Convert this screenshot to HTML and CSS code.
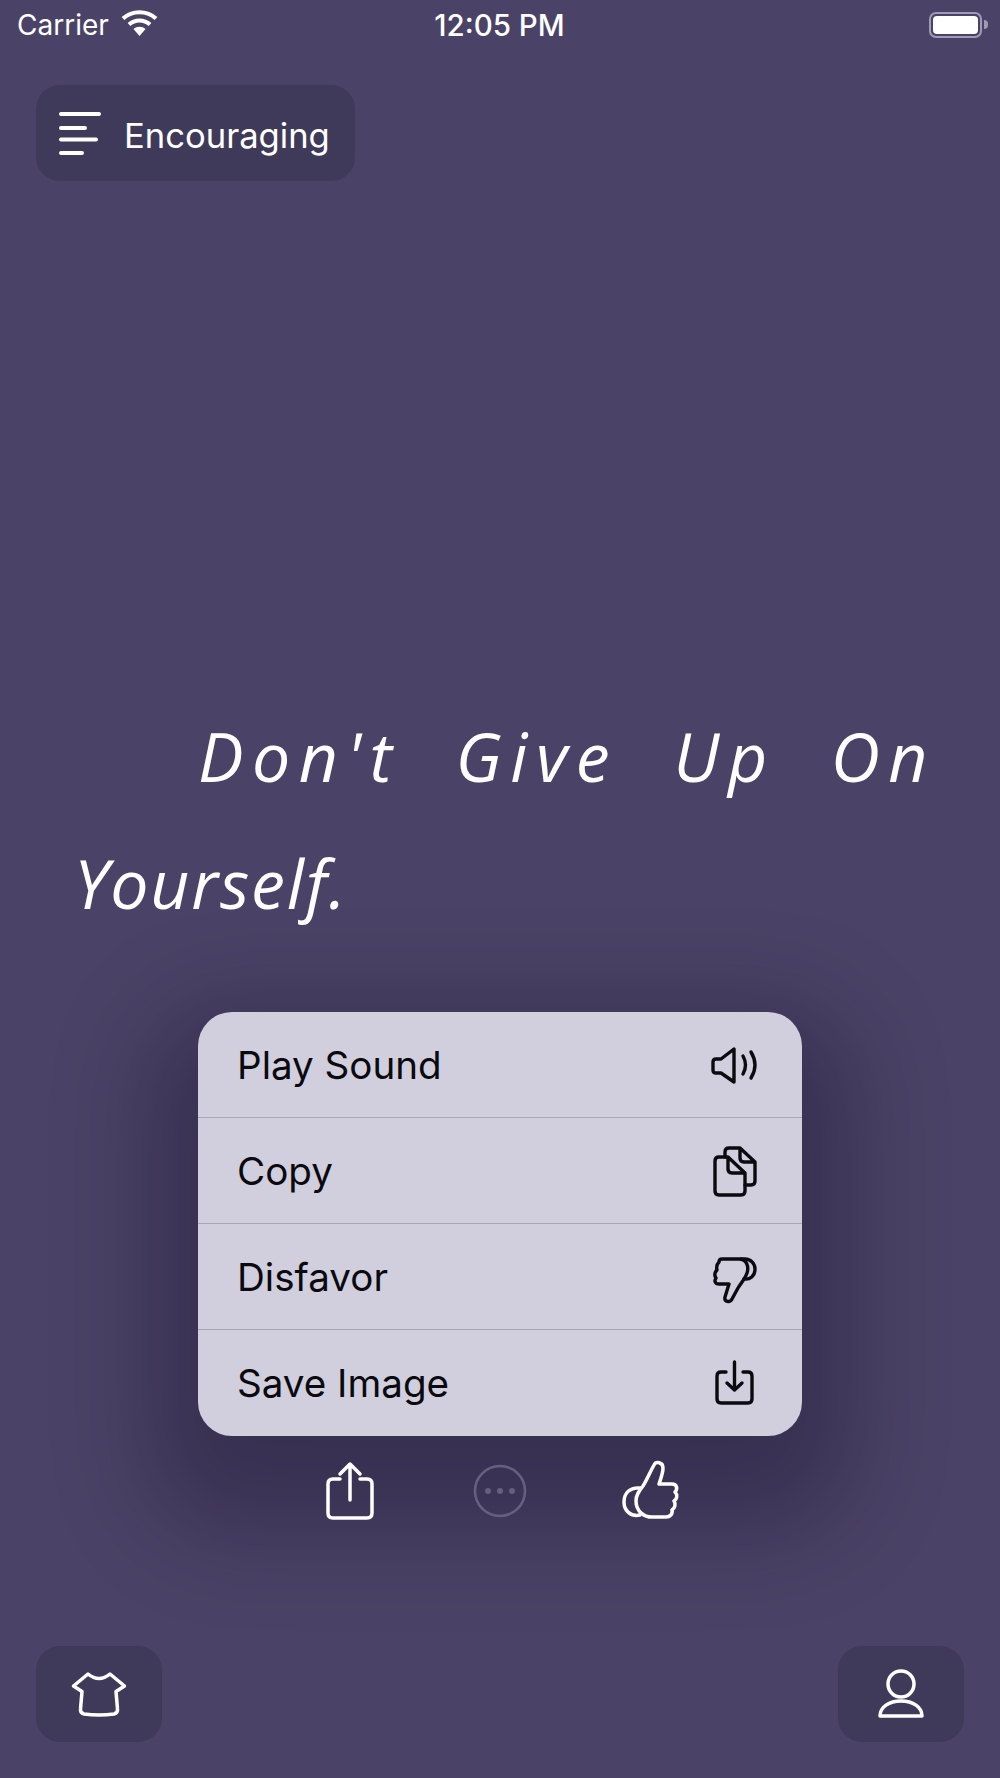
FILE: index.html

```html
<!DOCTYPE html>
<html lang="en">
<head>
  <meta charset="UTF-8" />
  <title>Encouraging</title>
  <link rel="stylesheet" href="styles.css">
</head>
<body>
  <div class="screen">
    <div class="status-bar">
      <div class="status-left">
        <span class="carrier">Carrier</span>
        <svg class="wifi" width="38" height="28" viewBox="0 0 38 28">
          <path d="M2 9.500C11 1 26 1 35 9.500M8 15.500C14 10 23 10 29 15.500" fill="none" stroke="#fff" stroke-width="4"/>
          <path d="M12.500 20C16 17 21 17 24.500 20L18.500 27Z" fill="#fff"/>
        </svg>
      </div>
      <span class="time">12:05 PM</span>
      <div class="battery"><div class="battery-fill"></div></div>
    </div>

    <div class="top-row">
      <div class="pill">
        <svg width="42" height="43" viewBox="0 0 42 43">
          <path d="M2 2H40M2 16H26M2 27.500H37M2 41H23" fill="none" stroke="#fff" stroke-width="4" stroke-linecap="round"/>
        </svg>
        <span class="pill-label">Encouraging</span>
      </div>
    </div>

    <p class="quote"><span class="quote-first">Don't Give Up On</span><br><span class="quote-second">Yourself.</span></p>

    <div class="menu">
      <div class="menu-row">
        <span>Play Sound</span>
        <svg class="menu-icon" width="56" height="56" viewBox="-4 -4 56 56">
          <path d="M23 8V41L10 32H5Q2 32 2 29V21Q2 18 5 18H10Z"/>
          <path d="M32 15Q37 24 32 33M40 11Q48 24 40 37"/>
        </svg>
      </div>
      <div class="menu-row">
        <span>Copy</span>
        <svg class="menu-icon" width="56" height="56" viewBox="-4 -4 56 56">
          <path d="M14 10V5Q14 1 18 1H29L44 15V34Q44 38 40 38H34M29 1V11Q29 15 33 15H44"/>
          <path d="M17 10H8Q4 10 4 14V44Q4 48 8 48H30Q34 48 34 44V26ZM17 10V22Q17 26 21 26H34"/>
        </svg>
      </div>
      <div class="menu-row">
        <span>Disfavor</span>
        <svg class="menu-icon" width="56" height="56" viewBox="-4 -4 56 56">
          <path d="M11 6H28C36 6 38 14 36 20C34 26 30 30 27 35L21 46C19 50 13 49 14 44L18 31H8C4 31 3 28 5 25C3 22 4 19 6 17C5 13 7 10 8 9Q8 6 11 6Z"/>
          <path d="M30 6H34C40 6 44 11 44 16C44 23 39 27 33 26"/>
        </svg>
      </div>
      <div class="menu-row">
        <span>Save Image</span>
        <svg class="menu-icon" width="56" height="56" viewBox="-4 -4 56 56">
          <path d="M15 13H10Q6 13 6 17V40Q6 44 10 44H37Q41 44 41 40V17Q41 13 37 13H32"/>
          <path d="M23.500 3V31M16 24L23.500 31L31 24"/>
        </svg>
      </div>
    </div>

    <div class="actions">
      <svg class="action-icon" width="64" height="72" viewBox="0 0 64 72">
        <path d="M22 24H15Q10 24 10 29V58Q10 63 15 63H49Q54 63 54 58V29Q54 24 49 24H42"/>
        <path d="M32 45V9M22 19L32 9L42 19"/>
      </svg>
      <svg class="more-icon" width="64" height="72" viewBox="0 0 64 72">
        <circle cx="32" cy="36" r="25" fill="none" stroke="#675f80" stroke-width="2.500"/>
        <circle cx="20" cy="36" r="3" fill="#675f80"/>
        <circle cx="32" cy="36" r="3" fill="#675f80"/>
        <circle cx="44" cy="36" r="3" fill="#675f80"/>
      </svg>
      <svg class="action-icon" width="64" height="72" viewBox="0 0 64 72">
        <path d="M36 10C38 6 45 7 45 13C45 18 43 23 41 29H54C59 29 60 34 57 37C60 40 59 44 56 46C58 49 57 53 54 55C55 59 52 62 48 62H36C26 63 18 56 18 46C18 40 21 36 25 31C29 25 32 17 36 10Z"/>
        <path d="M22 33C12 32 6 38 6 47C6 56 13 62 22 60"/>
      </svg>
    </div>

    <div class="bottom-row">
      <div class="square-btn">
        <svg class="action-icon" width="64" height="56" viewBox="0 0 64 56">
          <path d="M21 8Q32 17 43 8L57.500 20L49 25.500L50.500 43Q51 47 47 48Q32 50 17 48Q13 47 13.500 43L15 25.500L6.500 20Z"/>
        </svg>
      </div>
      <div class="square-btn">
        <svg class="action-icon" width="64" height="56" viewBox="0 0 64 56">
          <circle cx="32" cy="18" r="13"/>
          <path d="M11 50C11 41 20 35 32 35C44 35 53 41 53 50Z"/>
        </svg>
      </div>
    </div>
  </div>
</body>
</html>
```

FILE: styles.css

```css
body {
  margin: 0;
  background-color: #4b4367;
  font-family: Inter, "Liberation Sans", sans-serif;
  color: #ffffff;
}

.screen {
  display: flex;
  flex-direction: column;
  height: 1778px;
  overflow: hidden;
}

.status-bar {
  display: grid;
  grid-template-columns: 1fr auto 1fr;
  align-items: center;
  height: 50px;
  padding: 0 18px 0 17px;
}

.status-left {
  display: flex;
  align-items: center;
  gap: 12px;
}

.carrier {
  font-size: 28px;
}

.time {
  font-size: 29.500px;
  font-weight: 500;
}

.wifi {
  margin-top: -4px;
}

.battery {
  justify-self: end;
  box-sizing: border-box;
  width: 53px;
  height: 26px;
  padding: 2px;
  border: 2px solid #a09bb2;
  border-radius: 7px;
  position: relative;
}

.battery::after {
  content: "";
  position: absolute;
  right: -8px;
  top: 6px;
  width: 4px;
  height: 9px;
  background-color: #a09bb2;
  border-radius: 0 4px 4px 0;
}

.battery-fill {
  height: 100%;
  background-color: #ffffff;
  border-radius: 4px;
}

.top-row {
  display: flex;
  padding: 35px 36px 0;
}

.pill {
  display: flex;
  align-items: center;
  gap: 23px;
  height: 96px;
  padding: 0 25px 0 23px;
  background-color: #403a5a;
  border-radius: 24px;
}

.pill-label {
  margin-top: 3px;
  font-size: 34.600px;
}

.quote {
  margin: 511px 0 0;
  padding-left: 74px;
  text-indent: 124px;
  font-family: "Open Sans", sans-serif;
  font-style: italic;
  font-size: 68px;
  line-height: 127px;
}

.quote-first {
  letter-spacing: 8.500px;
  word-spacing: 29px;
}

.quote-second {
  letter-spacing: 1.800px;
}

.menu {
  width: 604px;
  margin: 66px auto 0;
  background-color: #d1cfdd;
  border-radius: 34px;
  box-shadow: 0 45px 90px 50px rgba(20, 15, 40, 0.34);
  color: #0a0a0f;
}

.menu-row {
  display: flex;
  justify-content: space-between;
  align-items: center;
  box-sizing: border-box;
  height: 106px;
  padding: 0 39px;
  font-size: 38.600px;
  border-bottom: 1px solid #a9a6b7;
}

.menu-row:last-child {
  border-bottom: none;
}

.menu-icon {
  fill: none;
  stroke: #0a0a0f;
  stroke-width: 3.400;
  stroke-linecap: round;
  stroke-linejoin: round;
}

.actions {
  display: flex;
  justify-content: center;
  gap: 86px;
  margin-top: 19px;
  position: relative;
}

.action-icon {
  fill: none;
  stroke: #ffffff;
  stroke-width: 3.500;
  stroke-linecap: round;
  stroke-linejoin: round;
}

.bottom-row {
  display: flex;
  justify-content: space-between;
  margin-top: auto;
  padding: 0 36px 36px;
}

.square-btn {
  display: flex;
  justify-content: center;
  align-items: center;
  width: 126px;
  height: 96px;
  background-color: #403a5a;
  border-radius: 24px;
}
```
